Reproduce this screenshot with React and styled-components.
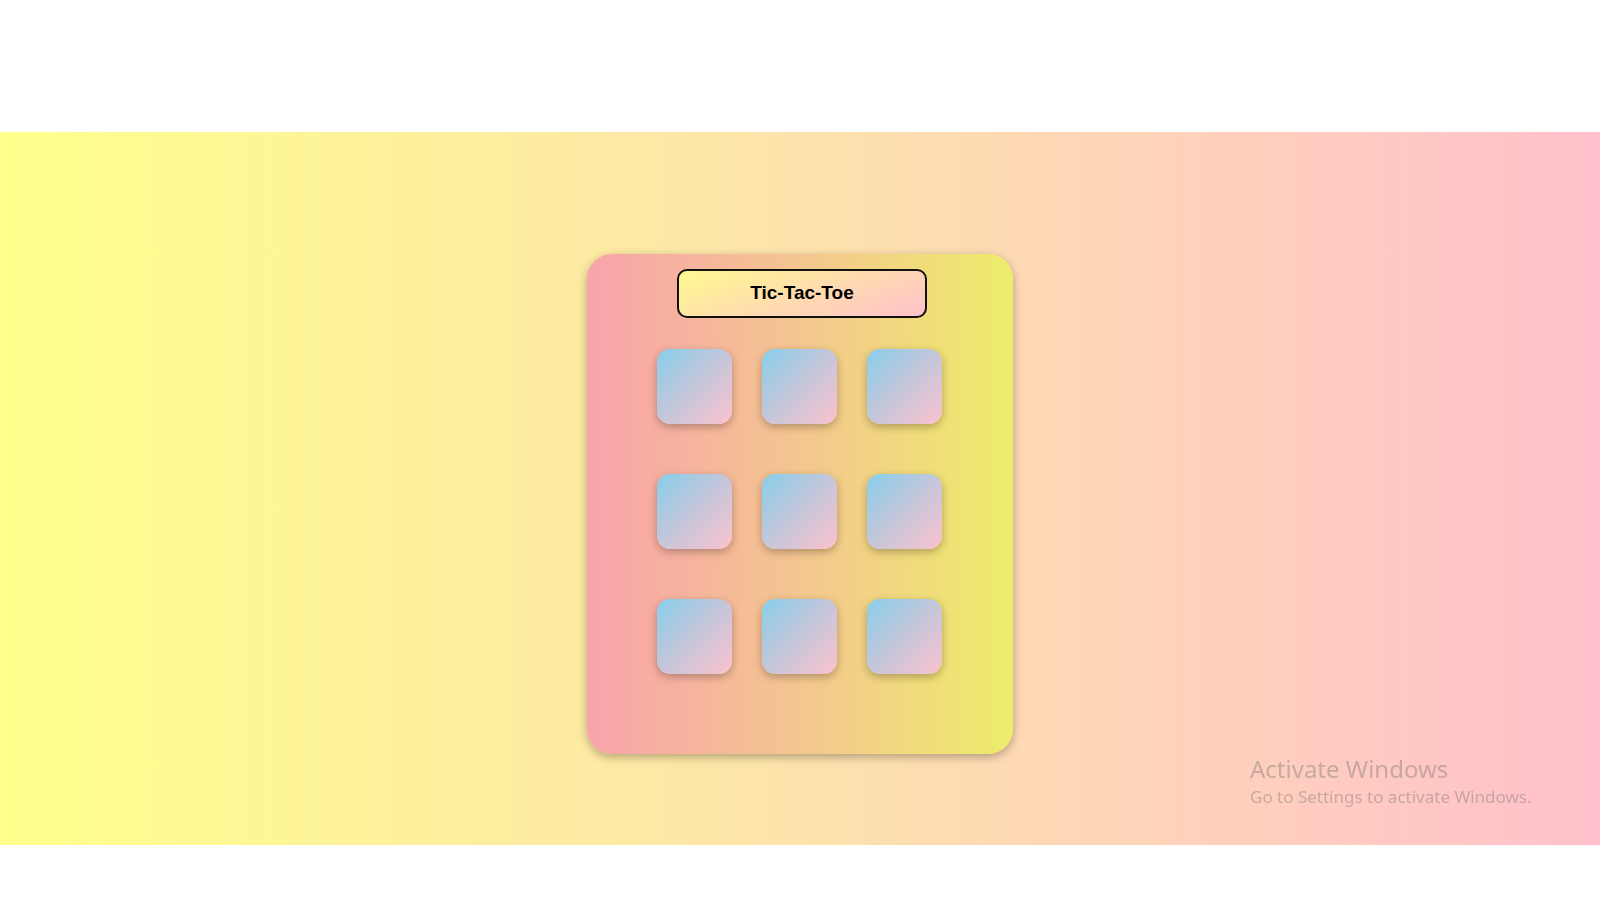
import React from "react";
import styled, { createGlobalStyle } from "styled-components";

const GlobalStyle = createGlobalStyle`
  html, body { margin: 0; padding: 0; background: #ffffff; }
  body { font-family: "Liberation Sans", Arial, sans-serif; }
`;

const Page = styled.div`
  padding-top: 132px;
  padding-bottom: 55px;
`;

const Band = styled.main`
  height: 713px;
  box-sizing: border-box;
  padding-top: 122px;
  display: flex;
  justify-content: center;
  align-items: flex-start;
  background: linear-gradient(to right, #ffff8c 0%, #fde6a8 45%, #ffc0cb 100%);
`;

const Card = styled.section`
  width: 426px;
  height: 500px;
  box-sizing: border-box;
  border-radius: 25px;
  padding-top: 15px;
  display: flex;
  flex-direction: column;
  align-items: center;
  background: linear-gradient(to right, #f9a3ab 0%, #f4c68f 50%, #eeed6a 100%);
  box-shadow: 0 3px 10px rgba(0, 0, 0, 0.3);
`;

const Title = styled.h1`
  margin: 0 0 0 4px;
  width: 250px;
  height: 49px;
  box-sizing: border-box;
  border: 2px solid #111;
  border-radius: 10px;
  padding-bottom: 2px;
  display: flex;
  align-items: center;
  justify-content: center;
  font-family: "Liberation Sans", Arial, sans-serif;
  font-size: 19px;
  font-weight: 700;
  color: #000;
  background: linear-gradient(160deg, #fffb8f 0%, #ffdcae 50%, #ffc2c9 100%);
`;

const Board = styled.div`
  margin-top: 31px;
  margin-right: 2px;
  display: grid;
  grid-template-columns: repeat(3, 75px);
  grid-auto-rows: 75px;
  column-gap: 30px;
  row-gap: 50px;
`;

const Cell = styled.button`
  width: 75px;
  height: 75px;
  border: none;
  padding: 0;
  border-radius: 13px;
  background: linear-gradient(135deg, #87ceeb 0%, #c5c6da 50%, #fbc2cd 100%);
  box-shadow: 0 3px 8px rgba(0, 0, 0, 0.28);
  cursor: pointer;
`;

const Watermark = styled.div`
  position: fixed;
  left: 1250px;
  top: 754px;
  color: rgba(110, 110, 110, 0.38);
  font-family: "Noto Sans", "Open Sans", sans-serif;
  pointer-events: none;
`;

const WatermarkTitle = styled.div`
  font-size: 24px;
  line-height: 30px;
`;

const WatermarkText = styled.div`
  font-size: 17px;
  line-height: 26px;
`;

export default function App() {
  const cells = Array.from({ length: 9 }, (_, i) => i);
  return (
    <>
      <GlobalStyle />
      <Page>
        <Band>
          <Card>
            <Title>Tic-Tac-Toe</Title>
            <Board>
              {cells.map((i) => (
                <Cell key={i} aria-label={`cell ${i + 1}`} />
              ))}
            </Board>
          </Card>
        </Band>
      </Page>
      <Watermark>
        <WatermarkTitle>Activate Windows</WatermarkTitle>
        <WatermarkText>Go to Settings to activate Windows.</WatermarkText>
      </Watermark>
    </>
  );
}
